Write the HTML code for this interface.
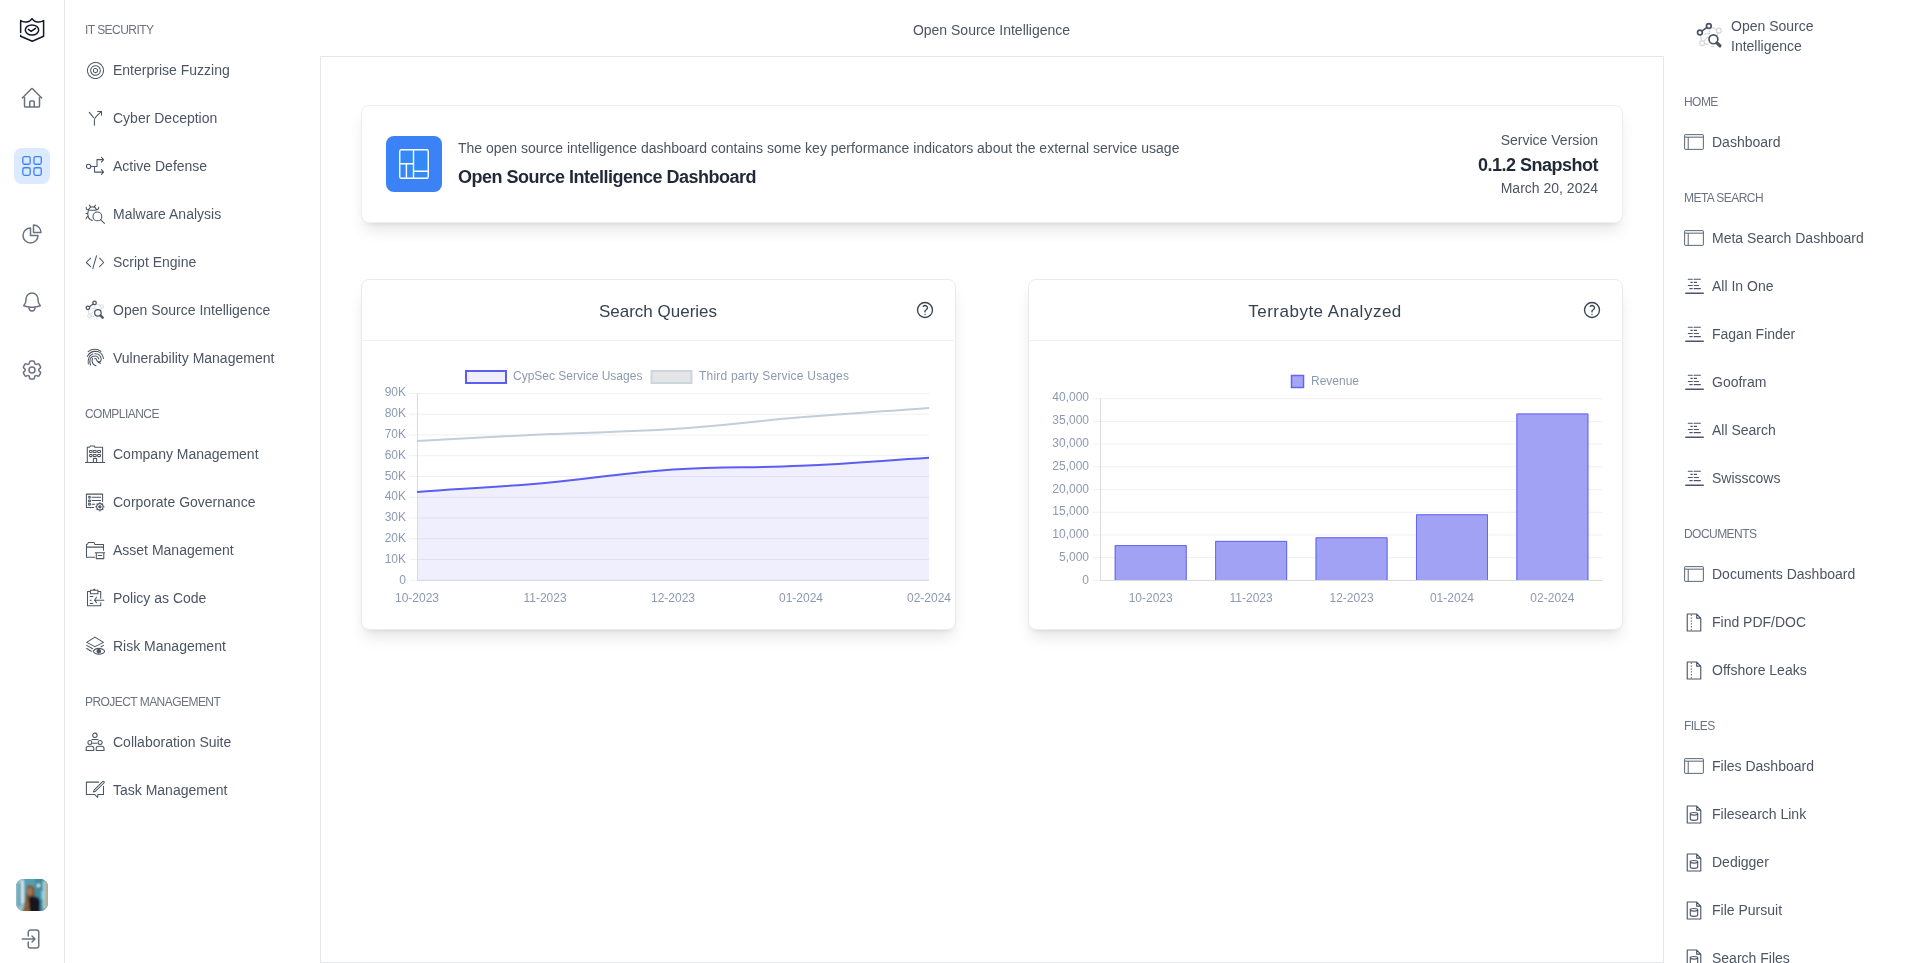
<!DOCTYPE html>
<html><head><meta charset="utf-8"><title>Open Source Intelligence</title>
<style>
*{margin:0;padding:0;box-sizing:border-box}
html,body{width:1920px;height:963px;overflow:hidden;background:#fff;font-family:"Liberation Sans",sans-serif;}
.abs{position:absolute;display:block}
.t{position:absolute;white-space:nowrap;line-height:1}
</style></head><body><div style="position:absolute;left:0;top:0;width:1920px;height:963px;will-change:transform">

<div class="abs" style="left:64px;top:0;width:1px;height:963px;background:#e5e7eb"></div>
<svg class="abs" style="left:16px;top:14px" width="32" height="32" viewBox="0 0 32 32" fill="none" stroke="#111827" stroke-width="1.5" stroke-linecap="round" stroke-linejoin="round"><path d="M4.65 21.3 V22.3 L16.3 27.2 L27.6 22.3 V6.5 C25 8.6 20 8.6 17.8 6.6 L16 4.65 L14.2 6.6 C12 8.6 7 8.6 4.65 6.5 V18.6"/><ellipse cx="16" cy="16" rx="6.7" ry="5.1"/><path d="M12.4 15.4 L15.1 17.3 L19.5 14.3"/></svg>
<svg class="abs" style="left:20px;top:86px" width="24" height="24" viewBox="0 0 24 24" fill="none" stroke="#6b7280" stroke-width="1.5" stroke-linecap="round" stroke-linejoin="round"><path d="M2.25 12l8.954-8.955c.44-.439 1.152-.439 1.591 0L21.75 12M4.5 9.75v10.125c0 .621.504 1.125 1.125 1.125H9.75v-4.875c0-.621.504-1.125 1.125-1.125h2.25c.621 0 1.125.504 1.125 1.125V21h4.125c.621 0 1.125-.504 1.125-1.125V9.75M8.25 21h8.25"/></svg>
<div class="abs" style="left:14px;top:148px;width:36px;height:36px;border-radius:8px;background:#dbeafe"></div>
<svg class="abs" style="left:14px;top:148px" width="36" height="36" viewBox="0 0 36 36" fill="none" stroke="#3b82f6" stroke-width="1.3" stroke-linecap="round" stroke-linejoin="round"><rect x="8.85" y="8.65" width="7.3" height="7.6" rx="1.5"/><rect x="19.95" y="8.65" width="7.3" height="7.6" rx="1.5"/><rect x="8.85" y="19.75" width="7.3" height="7.6" rx="1.5"/><rect x="19.95" y="19.75" width="7.3" height="7.6" rx="1.5"/></svg>
<svg class="abs" style="left:20px;top:222px" width="24" height="24" viewBox="0 0 24 24" fill="none" stroke="#6b7280" stroke-width="1.5" stroke-linecap="round" stroke-linejoin="round"><path d="M10.5 6a7.5 7.5 0 107.5 7.5h-7.5V6z"/><path d="M13.5 10.5H21A7.5 7.5 0 0013.5 3v7.5z"/></svg>
<svg class="abs" style="left:20px;top:290px" width="24" height="24" viewBox="0 0 24 24" fill="none" stroke="#6b7280" stroke-width="1.5" stroke-linecap="round" stroke-linejoin="round"><path d="M14.857 17.082a23.848 23.848 0 005.454-1.31A8.967 8.967 0 0118 9.75v-.7V9A6 6 0 006 9v.75a8.967 8.967 0 01-2.312 6.022c1.733.64 3.56 1.085 5.455 1.31m5.714 0a24.255 24.255 0 01-5.714 0m5.714 0a3 3 0 11-5.714 0"/></svg>
<svg class="abs" style="left:20px;top:358px" width="24" height="24" viewBox="0 0 24 24" fill="none" stroke="#6b7280" stroke-width="1.5" stroke-linecap="round" stroke-linejoin="round"><path d="M9.594 3.94c.09-.542.56-.94 1.11-.94h2.593c.55 0 1.02.398 1.11.94l.213 1.281c.063.374.313.686.645.87.074.04.147.083.22.127.325.196.72.257 1.075.124l1.217-.456a1.125 1.125 0 011.37.49l1.296 2.247a1.125 1.125 0 01-.26 1.431l-1.003.827c-.293.241-.438.613-.43.992a7.723 7.723 0 010 .255c-.008.378.137.75.43.991l1.004.827c.424.35.534.955.26 1.43l-1.298 2.247a1.125 1.125 0 01-1.369.491l-1.217-.456c-.355-.133-.75-.072-1.076.124a6.47 6.47 0 01-.22.128c-.331.183-.581.495-.644.869l-.213 1.281c-.09.543-.56.94-1.11.94h-2.594c-.55 0-1.019-.398-1.11-.94l-.213-1.281c-.062-.374-.312-.686-.644-.87a6.52 6.52 0 01-.22-.127c-.325-.196-.72-.257-1.076-.124l-1.217.456a1.125 1.125 0 01-1.369-.49l-1.297-2.247a1.125 1.125 0 01.26-1.431l1.004-.827c.292-.24.437-.613.43-.991a6.932 6.932 0 010-.255c.007-.38-.138-.751-.43-.992l-1.004-.827a1.125 1.125 0 01-.26-1.43l1.297-2.247a1.125 1.125 0 011.37-.491l1.216.456c.356.133.751.072 1.076-.124.072-.044.146-.086.22-.128.332-.183.582-.495.644-.869l.214-1.28z"/><path d="M15 12a3 3 0 11-6 0 3 3 0 016 0z"/></svg>
<svg class="abs" style="left:16px;top:879px" width="32" height="32" viewBox="0 0 32 32"><defs><clipPath id="av"><rect x="0" y="0" width="32" height="32" rx="7.5"/></clipPath><filter id="bl" x="-10%" y="-10%" width="120%" height="120%"><feGaussianBlur stdDeviation="1"/></filter></defs>
<g clip-path="url(#av)"><rect width="32" height="32" fill="#5a9db0"/><g filter="url(#bl)">
<rect x="-2" y="-2" width="10" height="36" fill="#9cc3cc"/><rect x="1" y="4" width="4" height="24" fill="#6aa8b8"/><rect x="5.5" y="2" width="2.5" height="22" fill="#e2f0f2"/>
<rect x="19" y="-2" width="9" height="34" fill="#3f8ca2"/><rect x="21" y="5" width="3" height="3" fill="#cdebf0"/><rect x="25" y="12" width="2" height="8" fill="#7fc0cf"/><rect x="27" y="2" width="2" height="28" fill="#a9dde8"/><rect x="29.5" y="-2" width="4" height="36" fill="#c2ae7e"/>
<path d="M10.5 10 C10.5 7.5 12.5 6.5 14.5 6.6 C17 6.8 18.8 8.5 18.8 11 L19.5 34 H6 C8.5 27 10.3 20 10.5 10 Z" fill="#7a5435"/>
<ellipse cx="13.6" cy="12.5" rx="2.5" ry="4" fill="#a57858"/>
<path d="M12.5 19 C14 17.5 17 17.3 20 17.8 C22.8 18.5 24 20.5 24 23 V34 H13 Z" fill="#15181a"/>
<path d="M8 24 C9 28 8.5 31 7.5 34 H14 C13.5 29 13 24 12 19.5 Z" fill="#8a6040"/>
</g></g></svg>
<svg class="abs" style="left:20px;top:927px" width="24" height="24" viewBox="0 0 24 24" fill="none" stroke="#6b7280" stroke-width="1.5" stroke-linecap="round" stroke-linejoin="round"><path d="M8.25 9V5.25A2.25 2.25 0 0110.5 3h6a2.25 2.25 0 012.25 2.25v13.5A2.25 2.25 0 0116.5 21h-6a2.25 2.25 0 01-2.25-2.25V15M12 9l3 3m0 0l-3 3m3-3H2.25"/></svg>
<div class="t" style="left:85px;top:24px;font-size:12px;color:#6b7280;letter-spacing:-0.55px;">IT SECURITY</div>
<div class="t" style="left:113px;top:63px;font-size:14px;color:#4b5563;">Enterprise Fuzzing</div>
<svg class="abs" style="left:85px;top:60px" width="20" height="20" viewBox="0 0 20 20" fill="none" stroke="#4b5563" stroke-width="1.05" stroke-linecap="round" stroke-linejoin="round"><circle cx="10.5" cy="10.5" r="8" stroke-dasharray="2.6 0.9"/><circle cx="10.5" cy="10.5" r="4.8" stroke-dasharray="2.1 0.8"/><circle cx="10.5" cy="10.5" r="2.1" stroke-dasharray="1.4 0.8"/></svg>
<div class="t" style="left:113px;top:111px;font-size:14px;color:#4b5563;">Cyber Deception</div>
<svg class="abs" style="left:85px;top:108px" width="20" height="20" viewBox="0 0 20 20" fill="none" stroke="#4b5563" stroke-width="1.05" stroke-linecap="round" stroke-linejoin="round"><path d="M4.3 4.3 L8.6 9.7 M9.4 17.3 V12.6 C9.4 11 10.5 9.3 11.5 8.2 L16.3 3.7 M12.7 3.5 H16.5 V7.3"/></svg>
<div class="t" style="left:113px;top:159px;font-size:14px;color:#4b5563;">Active Defense</div>
<svg class="abs" style="left:85px;top:156px" width="20" height="20" viewBox="0 0 20 20" fill="none" stroke="#4b5563" stroke-width="1.05" stroke-linecap="round" stroke-linejoin="round"><circle cx="3.6" cy="10.4" r="2.2"/><path d="M5.8 10.4 H12 V3.6 H18.5 M16.4 1.3 L18.6 3.6 L16.4 6.1 M9.5 10.4 V16.1 H18.5 M16.4 13.6 L18.6 16.1 L16.4 18.4"/></svg>
<div class="t" style="left:113px;top:207px;font-size:14px;color:#4b5563;">Malware Analysis</div>
<svg class="abs" style="left:85px;top:204px" width="20" height="20" viewBox="0 0 20 20" fill="none" stroke="#4b5563" stroke-width="1.05" stroke-linecap="round" stroke-linejoin="round"><path d="M3.6 6 C4.2 4 5.5 2.8 7.5 2.8 C9.6 2.8 10.9 4 11.5 5.8 M4.8 6.3 H11 M3.6 6 C3 7.5 2.8 8.8 2.8 10.2 C2.8 12.5 3.5 14.3 5.1 15.5 L7.3 16.5 M1.2 3.2 L1.5 5.3 L3.6 6 M13.8 3.2 L13.3 5.1 L11.6 5.7 M4.3 1.1 L5.6 2.9 M10.5 1.1 L9.3 2.9 M1 9.4 H2.8 M1 14.8 L2.4 12.4"/><circle cx="12.4" cy="12.4" r="4.4"/><path d="M15.6 15.6 L19.4 19.4"/></svg>
<div class="t" style="left:113px;top:255px;font-size:14px;color:#4b5563;">Script Engine</div>
<svg class="abs" style="left:85px;top:252px" width="20" height="20" viewBox="0 0 20 20" fill="none" stroke="#4b5563" stroke-width="1.05" stroke-linecap="round" stroke-linejoin="round"><path d="M5.6 6.2 L1.3 10.5 L5.6 14.6 M14.6 6.2 L18.7 10.5 L14.6 14.6 M11.5 3.8 L7.8 16.7"/></svg>
<div class="t" style="left:113px;top:303px;font-size:14px;color:#4b5563;">Open Source Intelligence</div>
<svg class="abs" style="left:85px;top:300px" width="20" height="20" viewBox="0 0 20 20" fill="none" stroke="#4b5563" stroke-width="1.05" stroke-linecap="round" stroke-linejoin="round"><g stroke="#d3d7de" stroke-width="0.9"><circle cx="16.9" cy="6.4" r="1.8"/><circle cx="4.5" cy="15.7" r="1.8"/><path d="M3.3 9.6 L4.1 13.9 M11.2 3.7 L15.2 5.7 M9.7 4.7 L10.1 8.4 L5.9 8.9 M5.7 14.4 L8.9 10.9 M6.3 16.2 L8.7 16.5 M16.5 8.2 L15.6 10.1 M11.5 18 L13 18.3"/></g><circle cx="2.9" cy="7.8" r="1.75" stroke-width="1.25"/><circle cx="9.5" cy="2.9" r="1.75" stroke-width="1.25"/><path d="M4.4 6.7 L8.1 4" stroke-width="1.2"/><circle cx="12.9" cy="12.8" r="3.3" stroke-width="1.25"/><path d="M15.5 15.5 L17.7 17.6" stroke-width="2.4"/></svg>
<div class="t" style="left:113px;top:351px;font-size:14px;color:#4b5563;">Vulnerability Management</div>
<svg class="abs" style="left:85px;top:348px" width="20" height="20" viewBox="0 0 20 20" fill="none" stroke="#4b5563" stroke-width="1.05" stroke-linecap="round" stroke-linejoin="round"><path d="M3.2 3.6 C7 0.6 12.6 0.6 15.8 3.4 M2.3 8.4 C4.5 4.3 8.5 2.8 12.5 3.6 C15.6 4.3 17.8 6.8 18.5 10.4 M9.8 5.7 C13.5 5.3 16.3 8 16.2 11.8 C16.1 13.3 14.8 14.3 13.3 13.5 M7.8 5.9 C4.2 7.3 2.6 10.6 3.3 16 M5.5 17 C4.3 13 5 9.3 8.2 8.2 C11 7.3 13.4 8.6 13.8 10.9 M7.5 10.6 C6.7 12.9 7.6 15.6 9.3 17 L11 17.8 M9.6 10.8 C11 10.3 11.8 11 11.6 12.3 C12.5 14.3 14 15.1 15.8 15.3"/></svg>
<div class="t" style="left:85px;top:408px;font-size:12px;color:#6b7280;letter-spacing:-0.55px;">COMPLIANCE</div>
<div class="t" style="left:113px;top:447px;font-size:14px;color:#4b5563;">Company Management</div>
<svg class="abs" style="left:85px;top:444px" width="20" height="20" viewBox="0 0 20 20" fill="none" stroke="#4b5563" stroke-width="1.05" stroke-linecap="round" stroke-linejoin="round"><path d="M0.4 18.4 H19.9 M2.3 18.4 V3.3 H4.5 L5.2 1.9 H9.5 L9.8 3.3 H17.6 V18.4 M8.4 18.4 V14.4 H11.6 V18.4"/><rect x="4.6" y="6.4" width="2.5" height="2" rx="0.5"/><rect x="8.3" y="6.4" width="2.9" height="2" rx="0.5"/><rect x="12.6" y="6.4" width="2.9" height="2" rx="0.5"/><rect x="4.6" y="10.4" width="2.5" height="2.2" rx="0.5"/><rect x="8.3" y="10.4" width="2.9" height="2.2" rx="0.5"/><rect x="12.6" y="10.4" width="2.9" height="2.2" rx="0.5"/></svg>
<div class="t" style="left:113px;top:495px;font-size:14px;color:#4b5563;">Corporate Governance</div>
<svg class="abs" style="left:85px;top:492px" width="20" height="20" viewBox="0 0 20 20" fill="none" stroke="#4b5563" stroke-width="1.05" stroke-linecap="round" stroke-linejoin="round"><path d="M8.7 15.5 H1.4 V2.1 H17.6 V9.4"/><path d="M7.1 5.3 H15.7 M7.1 8.5 H15.7 M7.1 12.2 H9.7"/><rect x="3.6" y="4.3" width="1.8" height="1.8" rx="0.9"/><rect x="3.6" y="7.9" width="1.8" height="1.8" rx="0.3"/><rect x="3.6" y="11.3" width="1.8" height="1.8" rx="0.3"/><circle cx="14.9" cy="14.8" r="3.2"/><circle cx="14.9" cy="14.8" r="1.1" fill="#4b5563"/><path d="M14.9 10.6 V11.5 M14.9 18.1 V19 M10.7 14.8 H11.6 M18.2 14.8 H19.1 M12 11.9 L12.5 12.4 M17.3 17.2 L17.8 17.7 M17.8 11.9 L17.3 12.4 M12.5 17.2 L12 17.7"/></svg>
<div class="t" style="left:113px;top:543px;font-size:14px;color:#4b5563;">Asset Management</div>
<svg class="abs" style="left:85px;top:540px" width="20" height="20" viewBox="0 0 20 20" fill="none" stroke="#4b5563" stroke-width="1.05" stroke-linecap="round" stroke-linejoin="round"><path d="M9.8 17.2 H1.5 V4.4 L2.6 4.1 L3.4 2.4 H9 L9.8 4.4 H18.5 V10.3 M1.5 7.1 H18.3"/><path d="M11.3 12.8 V18.6 H18.8 V12.8 M10.2 12.8 H19.7 M13.2 15.5 H16.6"/></svg>
<div class="t" style="left:113px;top:591px;font-size:14px;color:#4b5563;">Policy as Code</div>
<svg class="abs" style="left:85px;top:588px" width="20" height="20" viewBox="0 0 20 20" fill="none" stroke="#4b5563" stroke-width="1.05" stroke-linecap="round" stroke-linejoin="round"><path d="M5.4 3.5 H2.5 V17.8 H15.7 V14.7 M15.7 10.3 V3.5 H12.9 M5.4 2.2 H12.9 V5.7 H5.4 Z M8.2 2.2 L9.3 1.1 L10.4 2.2 M5.1 8.5 H7.9 M5.1 12.2 H6.2 M5.1 15.5 H7.9 M11.5 9.2 L9.5 12.2 L11.5 14.7 M9.6 12.2 H18.8"/></svg>
<div class="t" style="left:113px;top:639px;font-size:14px;color:#4b5563;">Risk Management</div>
<svg class="abs" style="left:85px;top:636px" width="20" height="20" viewBox="0 0 20 20" fill="none" stroke="#4b5563" stroke-width="1.05" stroke-linecap="round" stroke-linejoin="round"><path d="M9.9 1.1 L18.5 6.4 L9.9 10.6 L1.7 6.4 Z M1.7 9.4 L7.6 12.8 M18.5 9.4 L16 10.8 M1.7 12.5 L6.3 15.3"/><path d="M8.2 15.3 C10.5 11.4 17.6 11.4 19.9 15.3 C17.6 19.3 10.5 19.3 8.2 15.3 Z"/><circle cx="13.8" cy="15.3" r="1.8" fill="#4b5563"/></svg>
<div class="t" style="left:85px;top:696px;font-size:12px;color:#6b7280;letter-spacing:-0.55px;">PROJECT MANAGEMENT</div>
<div class="t" style="left:113px;top:735px;font-size:14px;color:#4b5563;">Collaboration Suite</div>
<svg class="abs" style="left:85px;top:732px" width="20" height="20" viewBox="0 0 20 20" fill="none" stroke="#4b5563" stroke-width="1.05" stroke-linecap="round" stroke-linejoin="round"><circle cx="9.9" cy="3.3" r="2.2"/><path d="M7 7.4 H13 M7.8 11.3 H12"/><circle cx="4.9" cy="10.5" r="2"/><circle cx="15.1" cy="10.5" r="2"/><path d="M1.2 18.4 V16.4 C1.2 15 2.2 14.2 3.6 14.2 H6.4 C7.8 14.2 8.8 15 8.8 16.4 V18.4 Z M11.2 18.4 V16.4 C11.2 15 12.2 14.2 13.6 14.2 H16.6 C18 14.2 19 15 19 16.4 V18.4 Z"/></svg>
<div class="t" style="left:113px;top:783px;font-size:14px;color:#4b5563;">Task Management</div>
<svg class="abs" style="left:85px;top:780px" width="20" height="20" viewBox="0 0 20 20" fill="none" stroke="#4b5563" stroke-width="1.05" stroke-linecap="round" stroke-linejoin="round"><path d="M13.8 2.1 H1.4 V14.4 H9.6 L12.6 17.5 L12.9 14.4 H18.5 V6.3"/><path d="M8.5 11.9 L9.2 9.8 L17.6 1.6 C18 1.2 18.6 1.2 19 1.6 C19.3 2 19.3 2.6 18.9 3 L10.6 11.2 Z"/></svg>
<div class="t" style="left:691.5px;width:600px;text-align:center;top:23px;font-size:14px;color:#4b5563;">Open Source Intelligence</div>
<div class="abs" style="left:320px;top:56px;width:1344px;height:907px;border:1px solid #e5e7eb"></div>
<div class="abs" style="left:361px;top:105px;width:1262px;height:118px;background:#fff;border:1px solid #edeef1;border-radius:8px;box-shadow:0 10px 15px -3px rgba(0,0,0,.1),0 4px 6px -4px rgba(0,0,0,.1)"></div>
<div class="abs" style="left:386px;top:136px;width:56px;height:56px;border-radius:8px;background:#3b82f6"></div>
<svg class="abs" style="left:399px;top:149px" width="30" height="30" viewBox="0 0 30 30" fill="none" stroke="#ffffff" stroke-width="1.4" stroke-linecap="round" stroke-linejoin="round"><rect x="0.75" y="0.75" width="28.5" height="28.5" rx="1.5" fill="#338af6"/><path d="M14.5 0.75 V29.25 M0.75 14.7 H14.5 M7.4 14.7 V29.25 M14.5 22.2 H29.25"/></svg>
<div class="t" style="left:458px;top:141px;font-size:14px;color:#4b5563;">The open source intelligence dashboard contains some key performance indicators about the external service usage</div>
<div class="t" style="left:458px;top:168px;font-size:18px;color:#1f2937;font-weight:bold;letter-spacing:-0.5px;">Open Source Intelligence Dashboard</div>
<div class="t" style="right:322px;top:133px;font-size:14px;color:#4b5563;">Service Version</div>
<div class="t" style="right:322px;top:156px;font-size:18px;color:#1f2937;font-weight:bold;letter-spacing:-0.5px;">0.1.2 Snapshot</div>
<div class="t" style="right:322px;top:181px;font-size:14px;color:#4b5563;">March 20, 2024</div>
<div class="abs" style="left:361px;top:279px;width:595px;height:351px;background:#fff;border:1px solid #e9eaee;border-radius:8px;box-shadow:0 10px 15px -3px rgba(0,0,0,.1),0 4px 6px -4px rgba(0,0,0,.1)"></div>
<div class="abs" style="left:362px;top:340px;width:592px;height:1px;background:#eff0f3"></div>
<svg class="abs" style="left:915px;top:300px" width="20" height="20" viewBox="0 0 24 24" fill="none" stroke="#374151" stroke-width="1.6" stroke-linecap="round" stroke-linejoin="round"><path d="M9.879 7.519c1.171-1.025 3.071-1.025 4.242 0 1.172 1.025 1.172 2.687 0 3.712-.203.179-.43.326-.67.442-.745.361-1.45.999-1.45 1.827v.75M21 12a9 9 0 11-18 0 9 9 0 0118 0zm-9 5.25h.008v.008H12v-.008z"/></svg>
<div class="abs" style="left:1028px;top:279px;width:595px;height:351px;background:#fff;border:1px solid #e9eaee;border-radius:8px;box-shadow:0 10px 15px -3px rgba(0,0,0,.1),0 4px 6px -4px rgba(0,0,0,.1)"></div>
<div class="abs" style="left:1029px;top:340px;width:592px;height:1px;background:#eff0f3"></div>
<svg class="abs" style="left:1582px;top:300px" width="20" height="20" viewBox="0 0 24 24" fill="none" stroke="#374151" stroke-width="1.6" stroke-linecap="round" stroke-linejoin="round"><path d="M9.879 7.519c1.171-1.025 3.071-1.025 4.242 0 1.172 1.025 1.172 2.687 0 3.712-.203.179-.43.326-.67.442-.745.361-1.45.999-1.45 1.827v.75M21 12a9 9 0 11-18 0 9 9 0 0118 0zm-9 5.25h.008v.008H12v-.008z"/></svg>
<div class="t" style="left:358px;width:600px;text-align:center;top:303px;font-size:17px;color:#374151;">Search Queries</div>
<div class="t" style="left:1025px;width:600px;text-align:center;top:303px;font-size:17px;color:#374151;letter-spacing:0.5px;">Terrabyte Analyzed</div>
<svg class="abs" style="left:0;top:0" width="1920" height="963" viewBox="0 0 1920 963" font-family="Liberation Sans, sans-serif"><line x1="409" y1="580.20" x2="929" y2="580.20" stroke="#eef0f3" stroke-width="1"/><text x="406" y="583.90" text-anchor="end" font-size="12" fill="#8c9ab1">0</text><line x1="409" y1="559.46" x2="929" y2="559.46" stroke="#eef0f3" stroke-width="1"/><text x="406" y="563.02" text-anchor="end" font-size="12" fill="#8c9ab1">10K</text><line x1="409" y1="538.71" x2="929" y2="538.71" stroke="#eef0f3" stroke-width="1"/><text x="406" y="542.15" text-anchor="end" font-size="12" fill="#8c9ab1">20K</text><line x1="409" y1="517.97" x2="929" y2="517.97" stroke="#eef0f3" stroke-width="1"/><text x="406" y="521.27" text-anchor="end" font-size="12" fill="#8c9ab1">30K</text><line x1="409" y1="497.22" x2="929" y2="497.22" stroke="#eef0f3" stroke-width="1"/><text x="406" y="500.39" text-anchor="end" font-size="12" fill="#8c9ab1">40K</text><line x1="409" y1="476.48" x2="929" y2="476.48" stroke="#eef0f3" stroke-width="1"/><text x="406" y="479.51" text-anchor="end" font-size="12" fill="#8c9ab1">50K</text><line x1="409" y1="455.73" x2="929" y2="455.73" stroke="#eef0f3" stroke-width="1"/><text x="406" y="458.64" text-anchor="end" font-size="12" fill="#8c9ab1">60K</text><line x1="409" y1="434.99" x2="929" y2="434.99" stroke="#eef0f3" stroke-width="1"/><text x="406" y="437.76" text-anchor="end" font-size="12" fill="#8c9ab1">70K</text><line x1="409" y1="414.24" x2="929" y2="414.24" stroke="#eef0f3" stroke-width="1"/><text x="406" y="416.88" text-anchor="end" font-size="12" fill="#8c9ab1">80K</text><line x1="409" y1="393.50" x2="929" y2="393.50" stroke="#eef0f3" stroke-width="1"/><text x="406" y="396.00" text-anchor="end" font-size="12" fill="#8c9ab1">90K</text><path d="M417.00 491.90 C468.20 488.30 493.88 487.39 545.00 482.90 C596.28 478.39 621.67 472.83 673.00 469.40 C724.07 465.99 749.84 468.14 801.00 465.80 C852.24 463.46 877.80 460.94 929.00 457.70 L929 580.2 L417 580.2 Z" fill="rgba(99,102,241,0.1)" stroke="none"/><line x1="417.5" y1="393" x2="417.5" y2="580.5" stroke="#d9dbe0" stroke-width="1"/><line x1="417" y1="580.5" x2="929" y2="580.5" stroke="#d9dbe0" stroke-width="1"/><path d="M417.00 441.10 C468.20 438.38 493.79 436.70 545.00 434.30 C596.19 431.90 621.89 432.49 673.00 429.10 C724.29 425.69 749.76 421.54 801.00 417.30 C852.16 413.06 877.80 411.66 929.00 407.90" fill="none" stroke="#c3cedb" stroke-width="2"/><path d="M417.00 491.90 C468.20 488.30 493.88 487.39 545.00 482.90 C596.28 478.39 621.67 472.83 673.00 469.40 C724.07 465.99 749.84 468.14 801.00 465.80 C852.24 463.46 877.80 460.94 929.00 457.70" fill="none" stroke="#5b5ef0" stroke-width="2"/><text x="417" y="602" text-anchor="middle" font-size="12" fill="#8c9ab1">10-2023</text><text x="545" y="602" text-anchor="middle" font-size="12" fill="#8c9ab1">11-2023</text><text x="673" y="602" text-anchor="middle" font-size="12" fill="#8c9ab1">12-2023</text><text x="801" y="602" text-anchor="middle" font-size="12" fill="#8c9ab1">01-2024</text><text x="929" y="602" text-anchor="middle" font-size="12" fill="#8c9ab1">02-2024</text><rect x="466" y="371" width="40" height="12" fill="#eeeefd" stroke="#5b5ef0" stroke-width="2"/><text x="513" y="380" font-size="12" fill="#8c9ab1">CypSec Service Usages</text><rect x="651.5" y="371" width="40" height="12" fill="#e4e5e7" stroke="#cdd5df" stroke-width="2"/><text x="699" y="380" font-size="12" textLength="150" lengthAdjust="spacing" fill="#8c9ab1">Third party Service Usages</text><line x1="1093" y1="580.30" x2="1602.6" y2="580.30" stroke="#eef0f3" stroke-width="1"/><text x="1089" y="584.00" text-anchor="end" font-size="12" fill="#8c9ab1">0</text><line x1="1093" y1="557.60" x2="1602.6" y2="557.60" stroke="#eef0f3" stroke-width="1"/><text x="1089" y="561.14" text-anchor="end" font-size="12" fill="#8c9ab1">5,000</text><line x1="1093" y1="534.90" x2="1602.6" y2="534.90" stroke="#eef0f3" stroke-width="1"/><text x="1089" y="538.28" text-anchor="end" font-size="12" fill="#8c9ab1">10,000</text><line x1="1093" y1="512.20" x2="1602.6" y2="512.20" stroke="#eef0f3" stroke-width="1"/><text x="1089" y="515.42" text-anchor="end" font-size="12" fill="#8c9ab1">15,000</text><line x1="1093" y1="489.50" x2="1602.6" y2="489.50" stroke="#eef0f3" stroke-width="1"/><text x="1089" y="492.56" text-anchor="end" font-size="12" fill="#8c9ab1">20,000</text><line x1="1093" y1="466.80" x2="1602.6" y2="466.80" stroke="#eef0f3" stroke-width="1"/><text x="1089" y="469.70" text-anchor="end" font-size="12" fill="#8c9ab1">25,000</text><line x1="1093" y1="444.10" x2="1602.6" y2="444.10" stroke="#eef0f3" stroke-width="1"/><text x="1089" y="446.84" text-anchor="end" font-size="12" fill="#8c9ab1">30,000</text><line x1="1093" y1="421.40" x2="1602.6" y2="421.40" stroke="#eef0f3" stroke-width="1"/><text x="1089" y="423.98" text-anchor="end" font-size="12" fill="#8c9ab1">35,000</text><line x1="1093" y1="398.70" x2="1602.6" y2="398.70" stroke="#eef0f3" stroke-width="1"/><text x="1089" y="401.12" text-anchor="end" font-size="12" fill="#8c9ab1">40,000</text><line x1="1100.5" y1="398.5" x2="1100.5" y2="580.5" stroke="#d9dbe0" stroke-width="1"/><rect x="1114.71" y="545.10" width="72" height="35.20" fill="#a1a2f3"/><path d="M1115.21 580.30 V545.60 H1186.21 V580.30" fill="none" stroke="#6366f1" stroke-width="1"/><text x="1150.71" y="602" text-anchor="middle" font-size="12" fill="#8c9ab1">10-2023</text><rect x="1215.13" y="540.90" width="72" height="39.40" fill="#a1a2f3"/><path d="M1215.63 580.30 V541.40 H1286.63 V580.30" fill="none" stroke="#6366f1" stroke-width="1"/><text x="1251.13" y="602" text-anchor="middle" font-size="12" fill="#8c9ab1">11-2023</text><rect x="1315.55" y="537.30" width="72" height="43.00" fill="#a1a2f3"/><path d="M1316.05 580.30 V537.80 H1387.05 V580.30" fill="none" stroke="#6366f1" stroke-width="1"/><text x="1351.55" y="602" text-anchor="middle" font-size="12" fill="#8c9ab1">12-2023</text><rect x="1415.97" y="514.30" width="72" height="66.00" fill="#a1a2f3"/><path d="M1416.47 580.30 V514.80 H1487.47 V580.30" fill="none" stroke="#6366f1" stroke-width="1"/><text x="1451.97" y="602" text-anchor="middle" font-size="12" fill="#8c9ab1">01-2024</text><rect x="1516.39" y="413.50" width="72" height="166.80" fill="#a1a2f3"/><path d="M1516.89 580.30 V414.00 H1587.89 V580.30" fill="none" stroke="#6366f1" stroke-width="1"/><text x="1552.39" y="602" text-anchor="middle" font-size="12" fill="#8c9ab1">02-2024</text><line x1="1100" y1="580.5" x2="1602.6" y2="580.5" stroke="#d9dbe0" stroke-width="1"/><rect x="1291.5" y="375.5" width="12" height="12" fill="#a5a6f6" stroke="#6366f1" stroke-width="1.5"/><text x="1311" y="385" font-size="12" fill="#8c9ab1">Revenue</text></svg>
<svg class="abs" style="left:1696px;top:22px" width="27" height="27" viewBox="0 0 20 20" fill="none" stroke="#4b5563" stroke-width="1.2" stroke-linecap="round" stroke-linejoin="round"><g stroke="#d3d7de" stroke-width="0.9"><circle cx="16.9" cy="6.4" r="1.8"/><circle cx="4.5" cy="15.7" r="1.8"/><path d="M3.3 9.6 L4.1 13.9 M11.2 3.7 L15.2 5.7 M9.7 4.7 L10.1 8.4 L5.9 8.9 M5.7 14.4 L8.9 10.9 M6.3 16.2 L8.7 16.5 M16.5 8.2 L15.6 10.1 M11.5 18 L13 18.3"/></g><circle cx="2.9" cy="7.8" r="1.75" stroke-width="1.25"/><circle cx="9.5" cy="2.9" r="1.75" stroke-width="1.25"/><path d="M4.4 6.7 L8.1 4" stroke-width="1.2"/><circle cx="12.9" cy="12.8" r="3.3" stroke-width="1.25"/><path d="M15.5 15.5 L17.7 17.6" stroke-width="2.4"/></svg>
<div class="t" style="left:1731px;top:19px;font-size:14px;color:#4b5563;">Open Source</div>
<div class="t" style="left:1731px;top:39px;font-size:14px;color:#4b5563;">Intelligence</div>
<div class="t" style="left:1684px;top:96px;font-size:12px;color:#6b7280;letter-spacing:-0.55px;">HOME</div>
<div class="t" style="left:1712px;top:135px;font-size:14px;color:#4b5563;">Dashboard</div>
<svg class="abs" style="left:1684px;top:134px" width="20" height="16" viewBox="0 0 19 15.2" fill="none" stroke="#5b6472" stroke-width="0.95"><rect x="0.6" y="0.6" width="17.8" height="14" rx="0.5"/><path d="M0.6 3 H18.4 M4 3 V14.6"/></svg>
<div class="t" style="left:1684px;top:192px;font-size:12px;color:#6b7280;letter-spacing:-0.55px;">META SEARCH</div>
<div class="t" style="left:1712px;top:231px;font-size:14px;color:#4b5563;">Meta Search Dashboard</div>
<svg class="abs" style="left:1684px;top:230px" width="20" height="16" viewBox="0 0 19 15.2" fill="none" stroke="#5b6472" stroke-width="0.95"><rect x="0.6" y="0.6" width="17.8" height="14" rx="0.5"/><path d="M0.6 3 H18.4 M4 3 V14.6"/></svg>
<div class="t" style="left:1712px;top:279px;font-size:14px;color:#4b5563;">All In One</div>
<svg class="abs" style="left:1685px;top:278px" width="19" height="17" viewBox="0 0 18.3 16" fill="none" stroke="#4b5563" stroke-width="1.1" stroke-linecap="round"><path d="M3.2 1 H7 M8.8 1 H14.8 M5.6 4 H7 M8.8 4 H11.2 M3.2 7 H7 M8.8 7 H13 M4.6 10 H7 M8.8 10 H14.8"/><path d="M0.8 14.5 H17.5" stroke-width="1.6"/></svg>
<div class="t" style="left:1712px;top:327px;font-size:14px;color:#4b5563;">Fagan Finder</div>
<svg class="abs" style="left:1685px;top:326px" width="19" height="17" viewBox="0 0 18.3 16" fill="none" stroke="#4b5563" stroke-width="1.1" stroke-linecap="round"><path d="M3.2 1 H7 M8.8 1 H14.8 M5.6 4 H7 M8.8 4 H11.2 M3.2 7 H7 M8.8 7 H13 M4.6 10 H7 M8.8 10 H14.8"/><path d="M0.8 14.5 H17.5" stroke-width="1.6"/></svg>
<div class="t" style="left:1712px;top:375px;font-size:14px;color:#4b5563;">Goofram</div>
<svg class="abs" style="left:1685px;top:374px" width="19" height="17" viewBox="0 0 18.3 16" fill="none" stroke="#4b5563" stroke-width="1.1" stroke-linecap="round"><path d="M3.2 1 H7 M8.8 1 H14.8 M5.6 4 H7 M8.8 4 H11.2 M3.2 7 H7 M8.8 7 H13 M4.6 10 H7 M8.8 10 H14.8"/><path d="M0.8 14.5 H17.5" stroke-width="1.6"/></svg>
<div class="t" style="left:1712px;top:423px;font-size:14px;color:#4b5563;">All Search</div>
<svg class="abs" style="left:1685px;top:422px" width="19" height="17" viewBox="0 0 18.3 16" fill="none" stroke="#4b5563" stroke-width="1.1" stroke-linecap="round"><path d="M3.2 1 H7 M8.8 1 H14.8 M5.6 4 H7 M8.8 4 H11.2 M3.2 7 H7 M8.8 7 H13 M4.6 10 H7 M8.8 10 H14.8"/><path d="M0.8 14.5 H17.5" stroke-width="1.6"/></svg>
<div class="t" style="left:1712px;top:471px;font-size:14px;color:#4b5563;">Swisscows</div>
<svg class="abs" style="left:1685px;top:470px" width="19" height="17" viewBox="0 0 18.3 16" fill="none" stroke="#4b5563" stroke-width="1.1" stroke-linecap="round"><path d="M3.2 1 H7 M8.8 1 H14.8 M5.6 4 H7 M8.8 4 H11.2 M3.2 7 H7 M8.8 7 H13 M4.6 10 H7 M8.8 10 H14.8"/><path d="M0.8 14.5 H17.5" stroke-width="1.6"/></svg>
<div class="t" style="left:1684px;top:528px;font-size:12px;color:#6b7280;letter-spacing:-0.55px;">DOCUMENTS</div>
<div class="t" style="left:1712px;top:567px;font-size:14px;color:#4b5563;">Documents Dashboard</div>
<svg class="abs" style="left:1684px;top:566px" width="20" height="16" viewBox="0 0 19 15.2" fill="none" stroke="#5b6472" stroke-width="0.95"><rect x="0.6" y="0.6" width="17.8" height="14" rx="0.5"/><path d="M0.6 3 H18.4 M4 3 V14.6"/></svg>
<div class="t" style="left:1712px;top:615px;font-size:14px;color:#4b5563;">Find PDF/DOC</div>
<svg class="abs" style="left:1686px;top:613px" width="16" height="19" viewBox="0 0 15.2 18.5" fill="none" stroke="#4b5563" stroke-width="1.1" stroke-linejoin="round"><path d="M1 1 H10.2 L14.2 5 V17.5 H1 Z M10.2 1 V5 H14.2"/><path d="M5 1.5 V17 " stroke-dasharray="1.4 1.4" stroke-width="0.9"/></svg>
<div class="t" style="left:1712px;top:663px;font-size:14px;color:#4b5563;">Offshore Leaks</div>
<svg class="abs" style="left:1686px;top:661px" width="16" height="19" viewBox="0 0 15.2 18.5" fill="none" stroke="#4b5563" stroke-width="1.1" stroke-linejoin="round"><path d="M1 1 H10.2 L14.2 5 V17.5 H1 Z M10.2 1 V5 H14.2"/><path d="M5 1.5 V17 " stroke-dasharray="1.4 1.4" stroke-width="0.9"/></svg>
<div class="t" style="left:1684px;top:720px;font-size:12px;color:#6b7280;letter-spacing:-0.55px;">FILES</div>
<div class="t" style="left:1712px;top:759px;font-size:14px;color:#4b5563;">Files Dashboard</div>
<svg class="abs" style="left:1684px;top:758px" width="20" height="16" viewBox="0 0 19 15.2" fill="none" stroke="#5b6472" stroke-width="0.95"><rect x="0.6" y="0.6" width="17.8" height="14" rx="0.5"/><path d="M0.6 3 H18.4 M4 3 V14.6"/></svg>
<div class="t" style="left:1712px;top:807px;font-size:14px;color:#4b5563;">Filesearch Link</div>
<svg class="abs" style="left:1686px;top:805px" width="16" height="19" viewBox="0 0 15.2 18.5" fill="none" stroke="#4b5563" stroke-width="1.1" stroke-linejoin="round"><path d="M1 1 H10.2 L14.2 5 V17.5 H1 Z M10.2 1 V5 H14.2"/><ellipse cx="7.6" cy="8.6" rx="3.6" ry="1.3"/><path d="M4 8.6 V13.6 C4 15.4 11.2 15.4 11.2 13.6 V8.6"/></svg>
<div class="t" style="left:1712px;top:855px;font-size:14px;color:#4b5563;">Dedigger</div>
<svg class="abs" style="left:1686px;top:853px" width="16" height="19" viewBox="0 0 15.2 18.5" fill="none" stroke="#4b5563" stroke-width="1.1" stroke-linejoin="round"><path d="M1 1 H10.2 L14.2 5 V17.5 H1 Z M10.2 1 V5 H14.2"/><ellipse cx="7.6" cy="8.6" rx="3.6" ry="1.3"/><path d="M4 8.6 V13.6 C4 15.4 11.2 15.4 11.2 13.6 V8.6"/></svg>
<div class="t" style="left:1712px;top:903px;font-size:14px;color:#4b5563;">File Pursuit</div>
<svg class="abs" style="left:1686px;top:901px" width="16" height="19" viewBox="0 0 15.2 18.5" fill="none" stroke="#4b5563" stroke-width="1.1" stroke-linejoin="round"><path d="M1 1 H10.2 L14.2 5 V17.5 H1 Z M10.2 1 V5 H14.2"/><ellipse cx="7.6" cy="8.6" rx="3.6" ry="1.3"/><path d="M4 8.6 V13.6 C4 15.4 11.2 15.4 11.2 13.6 V8.6"/></svg>
<div class="t" style="left:1712px;top:951px;font-size:14px;color:#4b5563;">Search Files</div>
<svg class="abs" style="left:1686px;top:949px" width="16" height="19" viewBox="0 0 15.2 18.5" fill="none" stroke="#4b5563" stroke-width="1.1" stroke-linejoin="round"><path d="M1 1 H10.2 L14.2 5 V17.5 H1 Z M10.2 1 V5 H14.2"/><ellipse cx="7.6" cy="8.6" rx="3.6" ry="1.3"/><path d="M4 8.6 V13.6 C4 15.4 11.2 15.4 11.2 13.6 V8.6"/></svg>
</div></body></html>
